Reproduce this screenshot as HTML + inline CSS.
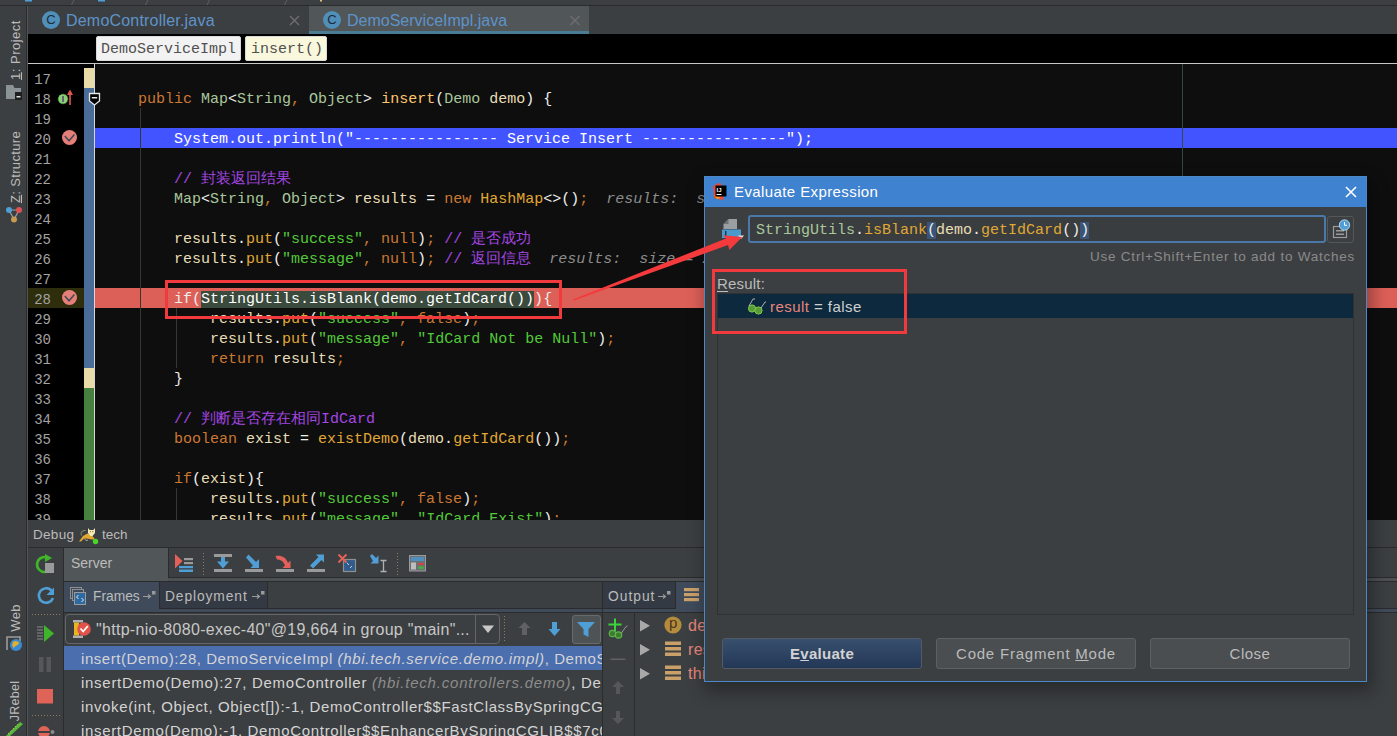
<!DOCTYPE html>
<html><head><meta charset="utf-8">
<style>
*{margin:0;padding:0;box-sizing:border-box}
html,body{width:1397px;height:736px;overflow:hidden;background:#3c3f41;font-family:"Liberation Sans",sans-serif}
.a{position:absolute}
.mono{font-family:"Liberation Mono",monospace}
#nav{left:0;top:0;width:1397px;height:6px;background:#3c3f41;border-bottom:1px solid #2b2b2b}
#lstrip{left:0;top:6px;width:28px;height:730px;background:#3c3f41;border-right:1px solid #535456;box-shadow:inset -1px 0 0 #2b2b2b}
#tabs{left:28px;top:6px;width:1369px;height:28px;background:#3c3f41}
.tab{height:28px;font-size:16px;line-height:28px;color:#5e93c9;white-space:nowrap}
.cicon{width:18px;height:18px;border-radius:50%;background:#4f8fba;color:#1e2a33;font-size:13px;line-height:18px;text-align:center;font-weight:normal;font-family:"Liberation Sans",sans-serif}
#crumbs{left:28px;top:34px;width:1369px;height:29px;background:#000}
.crumb{top:2px;height:25px;border:1px solid #d9d9d9;border-radius:2px;font-family:"Liberation Mono",monospace;font-size:15px;line-height:25px;padding:0 4px;color:#505050;white-space:pre}
#sep{left:28px;top:63px;width:1369px;height:1px;background:#c8c8c8}
#gutter{left:28px;top:64px;width:67px;height:456px;background:#000;overflow:hidden}
#editor{left:95px;top:64px;width:1302px;height:456px;background:#0e0e0e;overflow:hidden}
.ln{left:0;width:23px;text-align:right;font-family:"Liberation Mono",monospace;font-size:14px;color:#a4a3a3;height:20px;line-height:20px}
.cl{left:7px;height:20px;line-height:20px;font-family:"Liberation Mono",monospace;font-size:15px;white-space:pre;color:#dcdccc}
.k{color:#cc7832}.t{color:#a9c79c}.f{color:#ffc66d}.s{color:#53c93a}.c{color:#a446e2}.v{color:#e8ddb5}.m{color:#e0a835}.w{color:#eeeeee}.g{color:#8c8c8c;font-style:italic}
.hl{color:#fff}.sel{color:#fff;background:#3a4a3d}
.dtxt{font-size:14px;color:#bbbbbb;white-space:nowrap;line-height:18px}
.frm{font-family:"Liberation Sans",sans-serif;font-size:15px;color:#d4d4d4;white-space:nowrap;line-height:15px;height:18px;overflow:hidden;width:521px;letter-spacing:0.55px}
.frm i{color:#d4d4d4}
.frm i.gi{color:#8c8c8c}
.sans{font-family:"Liberation Sans",sans-serif;white-space:nowrap}
.dots{height:1px;background:repeating-linear-gradient(90deg,#8a7d5e 0 1px,transparent 1px 3px)}
.dotv{width:1px;background:repeating-linear-gradient(180deg,#8a7d5e 0 1px,transparent 1px 3px)}
.btn{border:1px solid #5e6163;border-radius:3px;background:#4a4e50;font-family:"Liberation Sans",sans-serif;font-size:15px;line-height:29px;text-align:center;color:#bbbbbb;white-space:nowrap}
.btn u{text-decoration-thickness:1px;text-underline-offset:1px}

</style></head><body>
<div class="a" id="nav"></div>
<svg class="a" style="left:0;top:0" width="1397" height="5" viewBox="0 0 1397 5">
  <rect x="25" y="0" width="7" height="1.5" fill="#4f9fd6"/><rect x="98" y="0" width="7" height="1.5" fill="#4f9fd6"/>
  <path d="M74 0L71.5 5M148 0L145.5 5M209.5 0L207 5M287 0L284.5 5" stroke="#5e6163" stroke-width="1"/>
  <rect x="320" y="0" width="2" height="1.5" fill="#e0c080"/>
</svg>
<div class="a" id="lstrip"></div>
<div class="a" id="tabs">
  <div class="a" style="left:281px;top:0;width:280px;height:28px;background:#515658;border-bottom:3px solid #4a7d95"></div>
  <div class="a cicon" style="left:14px;top:5px">C</div>
  <div class="a tab" style="left:38px;top:1px;letter-spacing:0.2px">DemoController.java</div>
  <div class="a cicon" style="left:295px;top:5px">C</div>
  <div class="a tab" style="left:319px;top:1px">DemoServiceImpl.java</div>
  <svg class="a" style="left:0;top:0" width="600" height="28" viewBox="0 0 600 28">
    <path d="M262 10L271 19M271 10L262 19" stroke="#6e6e6e" stroke-width="1.4"/>
    <path d="M542.5 10L551.5 19M551.5 10L542.5 19" stroke="#6e6e6e" stroke-width="1.4"/>
  </svg>
</div>
<div class="a" id="crumbs">
  <div class="a crumb" style="left:68px;width:145px;background:#f2f2f2">DemoServiceImpl</div>
  <div class="a crumb" style="left:217px;width:82px;background:#f9f7dc;padding-left:5px">insert()</div>
</div>
<div class="a" id="sep"></div>
<div class="a" id="gutter">
  <div class="a" style="left:0;top:224px;width:56px;height:20px;background:#2e2e0c"></div>
<div class="a ln" style="top:-14px">16</div>
<div class="a ln" style="top:6px">17</div>
<div class="a ln" style="top:26px">18</div>
<div class="a ln" style="top:46px">19</div>
<div class="a ln" style="top:66px">20</div>
<div class="a ln" style="top:86px">21</div>
<div class="a ln" style="top:106px">22</div>
<div class="a ln" style="top:126px">23</div>
<div class="a ln" style="top:146px">24</div>
<div class="a ln" style="top:166px">25</div>
<div class="a ln" style="top:186px">26</div>
<div class="a ln" style="top:206px">27</div>
<div class="a ln" style="top:226px">28</div>
<div class="a ln" style="top:246px">29</div>
<div class="a ln" style="top:266px">30</div>
<div class="a ln" style="top:286px">31</div>
<div class="a ln" style="top:306px">32</div>
<div class="a ln" style="top:326px">33</div>
<div class="a ln" style="top:346px">34</div>
<div class="a ln" style="top:366px">35</div>
<div class="a ln" style="top:386px">36</div>
<div class="a ln" style="top:406px">37</div>
<div class="a ln" style="top:426px">38</div>
<div class="a ln" style="top:446px">39</div>
  <div class="a" style="left:56px;top:4px;width:10px;height:20px;background:#e8dba8"></div>
  <div class="a" style="left:56px;top:24px;width:10px;height:280px;background:#4a6c98"></div>
  <div class="a" style="left:56px;top:304px;width:10px;height:20px;background:#e8dba8"></div>
  <div class="a" style="left:56px;top:324px;width:10px;height:132px;background:#46803f"></div>
  <div class="a" style="left:66px;top:0;width:1px;height:456px;background:#d8d8d8"></div>
  <svg class="a" style="left:28px;top:25px" width="20" height="18" viewBox="0 0 20 18">
    <circle cx="7" cy="10" r="4.8" fill="#8ccf78" stroke="#4ec83a" stroke-width="0.8" stroke-dasharray="1 1"/>
    <rect x="6.2" y="7" width="1.6" height="6" fill="#5a4a6a"/>
    <path d="M14 16V3" stroke="#e0584c" stroke-width="1.6"/>
    <path d="M11 6L14 0.6L17 6Z" fill="#e0584c"/>
  </svg>
  <svg class="a bp" style="left:33px;top:65px" width="17" height="17" viewBox="0 0 17 17">
    <circle cx="8.5" cy="8.5" r="7.5" fill="#e77f79"/>
    <path d="M3.8 7L8 11.8L13.4 5.6" stroke="#3f4a55" stroke-width="1.5" fill="none"/>
  </svg>
  <svg class="a bp" style="left:33px;top:225px" width="17" height="17" viewBox="0 0 17 17">
    <circle cx="8.5" cy="8.5" r="7.5" fill="#e77f79"/>
    <path d="M3.8 7L8 11.8L13.4 5.6" stroke="#3f4a55" stroke-width="1.5" fill="none"/>
  </svg>
</div>

<div class="a" id="editor">
  <div class="a" style="left:0;top:64px;width:1302px;height:20px;background:#4254ff"></div>
  <div class="a" style="left:0;top:224px;width:1302px;height:20px;background:#dd6058"></div>
  <div class="a" style="left:45px;top:44px;width:1px;height:412px;background:#37372f"></div>
  <div class="a" style="left:81px;top:244px;width:1px;height:60px;background:#37372f"></div>
  <div class="a" style="left:81px;top:424px;width:1px;height:40px;background:#37372f"></div>
  <div class="a" style="left:1087px;top:0;width:1px;height:456px;background:#344a3e"></div>
<div class="a cl" style="top:26px">    <span class="k">public </span><span class="t">Map</span><span class="w">&lt;</span><span class="t">String</span><span class="k">, </span><span class="t">Object</span><span class="w">&gt; </span><span class="f">insert</span><span class="w">(</span><span class="t">Demo </span><span class="v">demo</span><span class="w">) {</span></div>
<div class="a cl" style="top:66px">        <span class="hl">System.out.println("---------------- Service Insert ----------------");</span></div>
<div class="a cl" style="top:106px">        <span class="c">// 封装返回结果</span></div>
<div class="a cl" style="top:126px">        <span class="t">Map</span><span class="w">&lt;</span><span class="t">String</span><span class="k">, </span><span class="t">Object</span><span class="w">&gt; </span><span class="v">results </span><span class="w">= </span><span class="k">new </span><span class="m">HashMap</span><span class="w">&lt;&gt;()</span><span class="k">;</span><span class="g">  results:  size = 0</span></div>
<div class="a cl" style="top:166px">        <span class="v">results</span><span class="w">.</span><span class="m">put</span><span class="w">(</span><span class="s">"success"</span><span class="k">, null</span><span class="w">)</span><span class="k">; </span><span class="c">// 是否成功</span></div>
<div class="a cl" style="top:186px">        <span class="v">results</span><span class="w">.</span><span class="m">put</span><span class="w">(</span><span class="s">"message"</span><span class="k">, null</span><span class="w">)</span><span class="k">; </span><span class="c">// 返回信息</span><span class="g">  results:  size = 2</span></div>
<div class="a cl" style="top:226px">        <span class="w">if</span><span class="w">(</span><span class="sel">StringUtils.isBlank(demo.getIdCard())</span><span class="w">)</span><span class="w">{</span></div>
<div class="a cl" style="top:246px">        <span class="v">    results</span><span class="w">.</span><span class="m">put</span><span class="w">(</span><span class="s">"success"</span><span class="k">, false</span><span class="w">)</span><span class="k">;</span></div>
<div class="a cl" style="top:266px">        <span class="v">    results</span><span class="w">.</span><span class="m">put</span><span class="w">(</span><span class="s">"message"</span><span class="k">, </span><span class="s">"IdCard Not be Null"</span><span class="w">)</span><span class="k">;</span></div>
<div class="a cl" style="top:286px">        <span class="k">    return </span><span class="v">results</span><span class="k">;</span></div>
<div class="a cl" style="top:306px">        <span class="w">}</span></div>
<div class="a cl" style="top:346px">        <span class="c">// 判断是否存在相同IdCard</span></div>
<div class="a cl" style="top:366px">        <span class="k">boolean </span><span class="v">exist </span><span class="w">= </span><span class="m">existDemo</span><span class="w">(</span><span class="v">demo</span><span class="w">.</span><span class="m">getIdCard</span><span class="w">())</span><span class="k">;</span></div>
<div class="a cl" style="top:406px">        <span class="k">if</span><span class="w">(</span><span class="v">exist</span><span class="w">){</span></div>
<div class="a cl" style="top:426px">        <span class="v">    results</span><span class="w">.</span><span class="m">put</span><span class="w">(</span><span class="s">"success"</span><span class="k">, false</span><span class="w">)</span><span class="k">;</span></div>
<div class="a cl" style="top:446px">        <span class="v">    results</span><span class="w">.</span><span class="m">put</span><span class="w">(</span><span class="s">"message"</span><span class="k">, </span><span class="s">"IdCard Exist"</span><span class="w">)</span><span class="k">;</span></div>

</div>
<!-- left strip labels -->
<div class="a sans" style="left:-17px;top:43px;width:66px;height:14px;font-size:13px;line-height:14px;color:#bbbbbb;transform:rotate(-90deg);text-align:center;letter-spacing:0.5px"><u style="text-decoration-thickness:1px;text-underline-offset:1px">1</u>: Project</div>
<div class="a sans" style="left:-23px;top:159.5px;width:78px;height:14px;font-size:13px;line-height:14px;color:#bbbbbb;transform:rotate(-90deg);text-align:center;letter-spacing:0.35px"><u style="text-decoration-thickness:1px;text-underline-offset:1px">Z</u>: Structure</div>
<div class="a sans" style="left:1px;top:611px;width:30px;height:14px;font-size:13px;line-height:14px;color:#bbbbbb;transform:rotate(-90deg);text-align:center;letter-spacing:0.3px">Web</div>
<div class="a sans" style="left:-8px;top:694px;width:46px;height:14px;font-size:12.5px;line-height:14px;color:#bbbbbb;transform:rotate(-90deg);text-align:center;letter-spacing:0.3px">JRebel</div>
<svg class="a" style="left:0;top:0" width="28" height="736" viewBox="0 0 28 736">
  <!-- project icon -->
  <path d="M6 85H13L14.5 88H21V99H6Z" fill="#8a9496"/>
  <rect x="15" y="92" width="7" height="8" fill="#1e1e1e"/>
  <rect x="16.5" y="96" width="4" height="1.5" fill="#ddd"/>
  <!-- structure icon -->
  <path d="M9 210L14 219.5L19 210Z" fill="none" stroke="#9aa0a4" stroke-width="1.2"/>
  <circle cx="9" cy="210" r="3" fill="#4f9fd6"/>
  <circle cx="19" cy="210" r="3" fill="#e05050"/>
  <circle cx="14" cy="219.5" r="3" fill="#c89a50"/>
  <!-- web icon -->
  <path d="M7 650V637H20V641" fill="none" stroke="#9a9a9a" stroke-width="1.6"/>
  <circle cx="16" cy="645" r="6" fill="#3a8ad0"/>
  <path d="M13 642C15 640 18 641 19 643C18 646 15 645 14 648C12 647 12 644 13 642Z" fill="#e0b030"/>
  <!-- jrebel icon -->
  <path d="M6 736L20 722L23 724L10 736Z" fill="#5ab83a"/>
  <path d="M8 734L18 724" stroke="#c8e070" stroke-width="1" stroke-dasharray="1 1.5"/>
</svg>
<!-- ===== DEBUG PANEL ===== -->
<div class="a" style="left:28px;top:520px;width:1369px;height:27px;background:#3c3f41"></div>
<div class="a" style="left:28px;top:547px;width:1369px;height:1px;background:#2b2b2b"></div>
<div class="a sans" style="left:33px;top:528px;font-size:13.5px;line-height:13.5px;color:#bbbbbb;letter-spacing:0.3px">Debug</div>
<svg class="a" style="left:0;top:0" width="110" height="736" viewBox="0 0 110 736">
  <path d="M79 541.5L83 536L87.5 533.5L91.5 534.5L95 539.5L91.5 539.5L87 538.5L84 538.5L81 541.5Z" fill="#e0a830"/>
  <path d="M84.5 538.5L86 540.5L88 540" stroke="#b8a880" stroke-width="1" fill="none"/>
  <path d="M88 528L89.6 530H93.4L95 528V533L92.5 536H90.5L88 533Z" fill="#f3ecb8"/>
  <rect x="89.8" y="531.2" width="1.2" height="1" fill="#a06030"/><rect x="92.2" y="531.2" width="1.2" height="1" fill="#a06030"/>
  <path d="M81.5 535.5C80.5 532.5 81.5 530.5 85.5 530.5" stroke="#8a9a70" stroke-width="1" fill="none"/>
  <circle cx="95.5" cy="541.5" r="2.7" fill="#4ad52a"/>
</svg>
<div class="a sans" style="left:102px;top:528px;font-size:13.5px;line-height:13.5px;color:#bbbbbb">tech</div>
<!-- left toolbar -->
<div class="a" style="left:28px;top:548px;width:35px;height:188px;background:#3c3f41"></div>
<div class="a" style="left:63px;top:548px;width:1px;height:188px;background:#2b2b2b"></div>
<div class="a dots" style="left:32px;top:614px;width:28px"></div>
<div class="a dots" style="left:32px;top:715px;width:28px"></div>
<!-- server tab row -->
<div class="a" style="left:64px;top:548px;width:1333px;height:33px;background:#4b5054"></div>
<div class="a" style="left:64px;top:548px;width:104px;height:33px;background:#515658"></div>
<div class="a sans" style="left:71px;top:556px;font-size:14px;line-height:14px;color:#bbbbbb">Server</div>
<div class="a" style="left:168px;top:548px;width:1229px;height:30px;background:#3c3f41;border-left:1px solid #2b2b2b;border-bottom:1px solid #2b2b2b"></div>
<div class="a dotv" style="left:203px;top:553px;height:22px"></div>
<div class="a dotv" style="left:397px;top:553px;height:22px"></div>
<div class="a" style="left:64px;top:581px;width:1333px;height:1px;background:#2b2b2b"></div>
<!-- frames tabs row -->
<div class="a" style="left:64px;top:582px;width:538px;height:30px;background:#3f4b5b"></div>
<div class="a" style="left:159px;top:582px;width:109px;height:27px;background:#343a43;border-left:1px solid #2b2b2b;border-right:1px solid #2b2b2b;border-bottom:1px solid #2b2b2b"></div>
<div class="a" style="left:268px;top:582px;width:334px;height:27px;background:#3c3f41;border-bottom:1px solid #2b2b2b"></div>
<div class="a sans" style="left:93px;top:590px;font-size:13.8px;line-height:13.8px;color:#bbbbbb">Frames</div>
<div class="a sans" style="left:165px;top:590px;font-size:13.8px;line-height:13.8px;color:#bbbbbb;letter-spacing:0.9px">Deployment</div>
<div class="a" style="left:602px;top:582px;width:1px;height:154px;background:#2b2b2b"></div>
<div class="a" style="left:603px;top:582px;width:794px;height:30px;background:#3f4b5b"></div>
<div class="a" style="left:720px;top:582px;width:677px;height:27px;background:#3c3f41;border-bottom:1px solid #2b2b2b"></div>
<div class="a" style="left:603px;top:582px;width:73px;height:27px;background:#343a43;border-right:1px solid #2b2b2b;border-bottom:1px solid #2b2b2b"></div>
<div class="a sans" style="left:608px;top:590px;font-size:13.8px;line-height:13.8px;color:#bbbbbb;letter-spacing:1px">Output</div>
<div class="a" style="left:64px;top:612px;width:1333px;height:1px;background:#2b2b2b"></div>
<div class="a" style="left:634px;top:613px;width:1px;height:123px;background:#2b2b2b"></div>
<!-- thread combo -->
<div class="a" style="left:65px;top:614px;width:435px;height:30px;border:1px solid #646668;border-radius:4px;background:#3c3f41"></div>
<div class="a" style="left:475px;top:615px;width:1px;height:28px;background:#646668"></div>
<div class="a sans" style="left:96px;top:622px;font-size:16px;line-height:16px;color:#c8c8c8;letter-spacing:0.3px">"http-nio-8080-exec-40"@19,664 in group "main"...</div>
<div class="a dotv" style="left:504px;top:616px;height:27px"></div>
<div class="a" style="left:572px;top:615px;width:29px;height:29px;background:#4e5356;border:1px solid #6a6a6a;border-radius:3px"></div>
<!-- frames list -->
<div class="a" style="left:64px;top:646px;width:538px;height:24px;background:#4b6eaf"></div>
<div class="a frm" style="left:81px;top:651px">insert(Demo):28, DemoServiceImpl <i style="letter-spacing:0.7px">(hbi.tech.service.demo.impl)</i>, DemoServiceImpl</div>
<div class="a frm" style="left:81px;top:675px;letter-spacing:0.72px">insertDemo(Demo):27, DemoController <i class="gi" style="letter-spacing:0.8px">(hbi.tech.controllers.demo)</i>, DemoController</div>
<div class="a frm" style="left:81px;top:699px;letter-spacing:0.64px">invoke(int, Object, Object[]):-1, DemoController$$FastClassBySpringCGLIB</div>
<div class="a frm" style="left:81px;top:723px;letter-spacing:0.67px">insertDemo(Demo):-1, DemoController$$EnhancerBySpringCGLIB$$7c04</div>
<!-- variables -->
<div class="a frm" style="left:688px;top:618px;width:16px;height:20px;font-size:16px;line-height:16px;letter-spacing:0.3px;color:#e8857a">demo</div>
<div class="a frm" style="left:688px;top:642px;width:16px;height:20px;font-size:16px;line-height:16px;letter-spacing:0.3px;color:#e8857a">results</div>
<div class="a frm" style="left:688px;top:666px;width:16px;height:20px;font-size:16px;line-height:16px;letter-spacing:0.3px;color:#e8857a">this</div>
<svg class="a" style="left:0;top:0;pointer-events:none" width="1397" height="736" viewBox="0 0 1397 736">
  <!-- left toolbar: rerun -->
  <path d="M49 558.5A7.5 7.5 0 1 0 45.5 572" stroke="#3fb52a" stroke-width="2.6" fill="none"/>
  <path d="M45 554L52 558L45 562Z" fill="#3fb52a"/>
  <rect x="45" y="563" width="9" height="10" fill="#9a9a9a"/>
  <!-- refresh -->
  <path d="M51.5 590.5A7.3 7.3 0 1 0 53 598" stroke="#4f9fd6" stroke-width="2.6" fill="none"/>
  <path d="M54 587.5V595H46.5Z" fill="#4f9fd6"/>
  <!-- resume -->
  <path d="M44 625V642L54 633.5Z" fill="#3fb52a"/>
  <path d="M37 627H43M37 630H43M37 633H43M37 636H43M37 639H43" stroke="#8a8a8a" stroke-width="1.2"/>
  <!-- pause -->
  <rect x="39" y="657" width="4.5" height="15" fill="#555759"/>
  <rect x="46.5" y="657" width="4.5" height="15" fill="#555759"/>
  <!-- stop -->
  <rect x="37" y="689" width="16" height="14.5" fill="#e06358"/>
  <!-- breakpoints -->
  <circle cx="44" cy="732" r="6" fill="#e06358"/>
  <rect x="37" y="731" width="14" height="2" fill="#3c3f41"/>
  <circle cx="52.5" cy="732" r="2" fill="#8a8a8a"/>
  <!-- toolbar: show exec point -->
  <path d="M175 554V568.5L182.5 561Z" fill="#e5605a"/>
  <rect x="184" y="558" width="9" height="2.2" fill="#9a9a9a"/>
  <rect x="184" y="562" width="9" height="2.2" fill="#9a9a9a"/>
  <rect x="179" y="566" width="14" height="2.2" fill="#4f9fd6"/>
  <rect x="179" y="569.5" width="14" height="2.5" fill="#4f9fd6"/>
  <!-- step over -->
  <rect x="214" y="554" width="18" height="3" fill="#9a9a9a"/>
  <rect x="214" y="569" width="18" height="3" fill="#9a9a9a"/>
  <path d="M221 557H225V561.5H229L223 568.5L217 561.5H221Z" fill="#4f9fd6"/>
  <!-- step into -->
  <rect x="245" y="569" width="18" height="3" fill="#9a9a9a"/>
  <path d="M246 557.5L248.5 554.5L256 562L258.5 559.5H259V568H250.5L253 565.5Z" fill="#4f9fd6"/>
  <!-- force step into -->
  <rect x="276" y="569" width="18" height="3" fill="#9a9a9a"/>
  <path d="M275.5 556C281 555 286 557 288 563L290.5 560.5V568H282.5L285 565.5C283.5 561 280 559.5 277 559.5Z" fill="#e5605a"/>
  <!-- step out -->
  <rect x="307" y="569" width="18" height="3" fill="#9a9a9a"/>
  <path d="M310 565.5L318.5 557L316 554.5H324V562.5L321.5 560L313 568.5Z" fill="#4f9fd6"/>
  <!-- drop frame -->
  <rect x="343.5" y="559.5" width="12" height="12" fill="#2f5c8a" stroke="#8f8f8f" stroke-width="1.2"/>
  <path d="M347 563L349 565M352 566L350 568" stroke="#ddd" stroke-width="0.9"/>
  <path d="M338.5 554.5L346.5 562.5M346.5 554.5L338.5 562.5" stroke="#e5605a" stroke-width="2"/>
  <!-- run to cursor -->
  <path d="M370 556L372 554L376 558L378.5 555.5V563.5H370.5L373 561Z" fill="#4f9fd6"/>
  <path d="M380.5 560.5H386.5M383.5 560.5V571.5M380.5 571.5H386.5" stroke="#b0b0b0" stroke-width="1.3" fill="none"/>
  <!-- evaluate calc -->
  <rect x="409.5" y="555.5" width="16" height="15.5" fill="#6d7072" stroke="#9a9a9a" stroke-width="1"/>
  <rect x="411" y="557" width="13" height="4" fill="#4f8fc0"/>
  <rect x="411" y="562.5" width="5" height="7" fill="#bdbdbd"/>
  <rect x="418.5" y="563" width="5" height="2.2" fill="#d94040"/>
  <rect x="418.5" y="566.5" width="5" height="2.2" fill="#38c038"/>
  <!-- frames tab icon -->
  <rect x="70.5" y="587.5" width="11" height="11" fill="none" stroke="#8f8f8f" stroke-width="1"/>
  <rect x="72.5" y="589.5" width="11" height="11" fill="#3f4b5b" stroke="#8f8f8f" stroke-width="1"/>
  <rect x="74.5" y="592.5" width="11" height="12" fill="#2c6aa3" stroke="#9a9a9a" stroke-width="1"/>
  <path d="M78.5 595L76.5 597L78.5 599M81.5 598L83.5 600L81.5 602" stroke="#e8e8e8" stroke-width="1" fill="none"/>
  <!-- pins -->
  <path d="M143 596.5H150M148 594.5L150.5 596.5L148 598.5" stroke="#9a9a9a" stroke-width="1.1" fill="none"/>
  <rect x="152" y="591" width="3.5" height="3.5" fill="#9a9a9a"/>
  <path d="M252 596.5H259M257 594.5L259.5 596.5L257 598.5" stroke="#9a9a9a" stroke-width="1.1" fill="none"/>
  <rect x="261" y="591" width="3.5" height="3.5" fill="#9a9a9a"/>
  <path d="M658 596.5H665M663 594.5L665.5 596.5L663 598.5" stroke="#9a9a9a" stroke-width="1.1" fill="none"/>
  <rect x="667" y="591" width="3.5" height="3.5" fill="#9a9a9a"/>
  <!-- Output-tab next: watches icon bars -->
  <rect x="684" y="588" width="15" height="3.2" fill="#c9a06a"/>
  <rect x="684" y="593" width="15" height="3.2" fill="#c9a06a"/>
  <rect x="684" y="598" width="15" height="3.2" fill="#c9a06a"/>
  <!-- thread icon -->
  <rect x="73" y="620" width="10" height="2.5" fill="#b0b0b0"/>
  <rect x="73" y="635.5" width="10" height="2.5" fill="#b0b0b0"/>
  <rect x="74" y="622.5" width="5" height="13" fill="#e8b422"/>
  <circle cx="84" cy="629" r="6.8" fill="#e0524a"/>
  <path d="M80.5 628.5L83.2 631.5L87.8 626" stroke="#fff" stroke-width="1.8" fill="none"/>
  <!-- combo dropdown triangle -->
  <path d="M482 625.5H494L488 633Z" fill="#c8c8c8"/>
  <!-- up (disabled) / down arrows -->
  <path d="M524.5 622L518.5 628H522V635H527V628H530.5Z" fill="#5f6163"/>
  <path d="M552 622H557V629H560.5L554.5 636L548.5 629H552Z" fill="#4f9fd6"/>
  <!-- filter -->
  <path d="M577 622H595L588.5 629V637L583.5 634.5V629Z" fill="#4f9fd6"/>
  <!-- watches toolbar -->
  <path d="M615 618.5V631M608.5 624.5H621.5" stroke="#3ad43a" stroke-width="2"/>
  <circle cx="612.5" cy="633.5" r="3.2" fill="#3f7a30" stroke="#5ab84a" stroke-width="1.2"/>
  <circle cx="618.5" cy="635" r="3.2" fill="#3f7a30" stroke="#5ab84a" stroke-width="1.2"/>
  <path d="M621.5 633L626 626.5L627.5 626" stroke="#a0a0a0" stroke-width="0.9" fill="none"/>
  <rect x="610.5" y="658.5" width="15" height="1.5" fill="#5f6163"/>
  <path d="M618 681L612 687H616V694H620V687H624Z" fill="#555759"/>
  <path d="M616 711H620V718H624L618 724L612 718H616Z" fill="#555759"/>
  <!-- variables triangles -->
  <path d="M640 620V631.5L650 625.7Z" fill="#a8a8a8"/>
  <path d="M640 644V655.5L650 649.7Z" fill="#a8a8a8"/>
  <path d="M640 668V679.5L650 673.7Z" fill="#a8a8a8"/>
  <circle cx="673" cy="625" r="8.6" fill="#b58b3c"/>
  <rect x="665" y="641.5" width="16" height="3.5" fill="#c9a06a"/>
  <rect x="665" y="647" width="16" height="3.5" fill="#c9a06a"/>
  <rect x="665" y="652.5" width="16" height="3.5" fill="#c9a06a"/>
  <rect x="665" y="665.5" width="16" height="3.5" fill="#c9a06a"/>
  <rect x="665" y="671" width="16" height="3.5" fill="#c9a06a"/>
  <rect x="665" y="676.5" width="16" height="3.5" fill="#c9a06a"/>
</svg>
<div class="a sans" style="left:669px;top:615px;font-size:15px;line-height:15px;color:#4a3520">p</div>
<!-- ===== DIALOG ===== -->
<div class="a" style="left:704px;top:176px;width:663px;height:506px;background:#3c3f41;border:1px solid #4a88c7;box-shadow:3px 7px 16px 3px rgba(0,0,0,0.32)"></div>
<div class="a" style="left:705px;top:177px;width:661px;height:30px;background:#3f82d0"></div>
<div class="a sans" style="left:734px;top:184px;font-size:15px;line-height:15px;color:#ffffff;letter-spacing:0.4px">Evaluate Expression</div>
<svg class="a" style="left:1345px;top:186px" width="12" height="12" viewBox="0 0 12 12"><path d="M1 1L11 11M11 1L1 11" stroke="#fff" stroke-width="1.6"/></svg>
<!-- input -->
<div class="a" style="left:748px;top:215px;width:578px;height:28px;border:2px solid #4a78a8;border-radius:3px;background:#3a3d3f"></div>
<div class="a cl" style="left:756px;top:221px"><span class="t">StringUtils</span><span class="w">.</span><span class="m">isBlank</span><span class="w" style="background:#3b5578">(</span><span class="v">demo</span><span class="w">.</span><span class="m">getIdCard</span><span class="w">()</span><span class="w" style="background:#3b5578">)</span></div>
<div class="a" style="left:1327px;top:216px;width:27px;height:27px;border:1px solid #555859;border-radius:3px;background:#3c3f41"></div>
<div class="a sans" style="left:1090px;top:250px;font-size:13.5px;line-height:13.5px;color:#8a8a8a;letter-spacing:0.77px">Use Ctrl+Shift+Enter to add to Watches</div>
<div class="a sans" style="left:717px;top:276px;font-size:15px;line-height:15px;color:#bbbbbb;letter-spacing:0.2px"><u style="text-decoration-thickness:1px;text-underline-offset:2px">R</u>esult:</div>
<!-- tree -->
<div class="a" style="left:717px;top:293px;width:637px;height:322px;border:1px solid #2f3133;background:#3c3f41"></div>
<div class="a" style="left:718px;top:294px;width:635px;height:24px;background:#0d293e"></div>
<div class="a sans" style="left:770px;top:299px;font-size:15px;line-height:15px;color:#d0d0d0;letter-spacing:0.45px"><span style="color:#e8857a">result</span> = false</div>
<!-- buttons -->
<div class="a btn" style="left:722px;top:638px;width:200px;height:31px;background:linear-gradient(#384f6e,#233856);border-color:#525a64;font-weight:bold;color:#d2d2d2;letter-spacing:0.3px">E<u>v</u>aluate</div>
<div class="a btn" style="left:936px;top:638px;width:200px;height:31px;letter-spacing:0.78px">Code Fragment <u>M</u>ode</div>
<div class="a btn" style="left:1150px;top:638px;width:200px;height:31px;letter-spacing:0.5px">Close</div>
<svg class="a" style="left:0;top:0;pointer-events:none" width="1397" height="736" viewBox="0 0 1397 736">
  <!-- IJ icon -->
  <path d="M713 186L719 183L728 186L729 196L722 200L714 198Z" fill="#e84a3a"/>
  <path d="M721 184L729 186L728.5 197L724 199Z" fill="#2a8ae8"/>
  <path d="M714 195L717 199L721 198Z" fill="#f0a020"/>
  <rect x="715.5" y="185.5" width="11" height="11" fill="#000"/>
  <text x="716.5" y="191.5" font-family="Liberation Sans" font-size="6" font-weight="bold" fill="#fff">IJ</text>
  <rect x="716.5" y="194" width="5" height="1" fill="#fff"/>
  <!-- history icon -->
  <path d="M723.5 224L728.5 219H737V229H723.5Z" fill="#9aa0a2"/>
  <path d="M723.5 224H728.5V219Z" fill="#6d7274"/>
  <rect x="722" y="229.5" width="19" height="8.5" fill="#4a9acc"/>
  <rect x="725" y="231" width="1.4" height="5" fill="#1d3550"/>
  <path d="M738 235.5H744L741 239Z" fill="#e8e8e8"/>
  <!-- watches btn icon -->
  <rect x="1333.5" y="226.5" width="13" height="11" fill="#3c3f41" stroke="#9a9a9a" stroke-width="1.2"/>
  <rect x="1336" y="230" width="8" height="1.5" fill="#9a9a9a"/>
  <rect x="1336" y="233.5" width="8" height="1.5" fill="#9a9a9a"/>
  <circle cx="1344.5" cy="225" r="5.2" fill="#4f9fd6" stroke="#cfe6f5" stroke-width="0.8"/>
  <path d="M1344.5 222V225.3H1347" stroke="#fff" stroke-width="1" fill="none"/>
  <!-- glasses icon -->
  <circle cx="752" cy="308.5" r="3.6" fill="#5a9a3a" stroke="#7ad04a" stroke-width="1"/>
  <circle cx="758.5" cy="310.5" r="3.6" fill="#5a9a3a" stroke="#7ad04a" stroke-width="1"/>
  <path d="M749 306L753 299L755 299M761 308L765 302L766 302" stroke="#c0c0c0" stroke-width="0.9" fill="none"/>
</svg>
<!-- ===== OVERLAYS ===== -->
<svg class="a" style="left:88px;top:92px" width="14" height="15" viewBox="0 0 14 15">
  <path d="M1.5 1.5H11.5V9L6.5 13L1.5 9Z" fill="#000" stroke="#e8e8e8" stroke-width="1.3"/>
  <rect x="3.8" y="5" width="5.4" height="1.5" fill="#e8e8e8"/>
</svg>
<div class="a" style="left:165px;top:280px;width:397px;height:39px;border:3px solid #f03a3e"></div>
<div class="a" style="left:712px;top:269px;width:195px;height:65px;border:3px solid #f03a3e"></div>
<svg class="a" style="left:0;top:0" width="1397" height="736" viewBox="0 0 1397 736">
  <path d="M573 299.4L726 238.4L723.3 235.2L742.3 236.9L729.4 250.1L728 245.1L573.5 300.8Z" fill="#f43a3c"/>
</svg>

</body></html>
